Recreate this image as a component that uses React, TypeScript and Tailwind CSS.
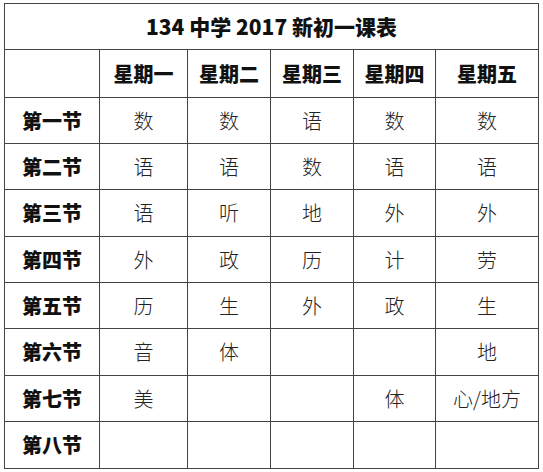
const DAYS = ['星期一', '星期二', '星期三', '星期四', '星期五'];

const ROWS: [string, string[]][] = [
  ['第一节', ['数', '数', '语', '数', '数']],
  ['第二节', ['语', '语', '数', '语', '语']],
  ['第三节', ['语', '听', '地', '外', '外']],
  ['第四节', ['外', '政', '历', '计', '劳']],
  ['第五节', ['历', '生', '外', '政', '生']],
  ['第六节', ['音', '体', '', '', '地']],
  ['第七节', ['美', '', '', '体', '心/地方']],
  ['第八节', ['', '', '', '', '']],
];

const HEIGHTS = ['h-[46px]', 'h-[46px]', 'h-[47px]', 'h-[46px]', 'h-[46px]', 'h-[47px]', 'h-[46px]', 'h-[47px]'];

export default function App() {
  return (
    <div
      className="min-h-screen w-[543px] bg-white pl-[4px] pt-[3px] text-[#1a1a1a]"
      style={{ fontFamily: '"Noto Sans CJK SC", "Noto Sans", sans-serif' }}
    >
      <table className="w-[534px] table-fixed border-collapse text-[20px] leading-none">
        <colgroup>
          <col className="w-[95px]" />
          <col className="w-[88px]" />
          <col className="w-[83px]" />
          <col className="w-[83px]" />
          <col className="w-[82px]" />
          <col className="w-[103px]" />
        </colgroup>
        <tbody>
          <tr className="h-[46px]">
            <td colSpan={6} className="border border-[#444] text-center text-[21px] font-black text-[#111]">
              134 中学 2017 新初一课表
            </td>
          </tr>
          <tr className="h-[48px]">
            <td className="border border-[#444]" />
            {DAYS.map((d) => (
              <td key={d} className="border border-[#444] text-center font-black text-[#111]">
                {d}
              </td>
            ))}
          </tr>
          {ROWS.map(([label, cells], i) => (
            <tr key={label} className={HEIGHTS[i]}>
              <td className="border border-[#444] text-center font-black text-[#111]">{label}</td>
              {cells.map((c, j) => (
                <td key={j} className="border border-[#444] text-center font-light text-[#222]">
                  {c}
                </td>
              ))}
            </tr>
          ))}
        </tbody>
      </table>
    </div>
  );
}
